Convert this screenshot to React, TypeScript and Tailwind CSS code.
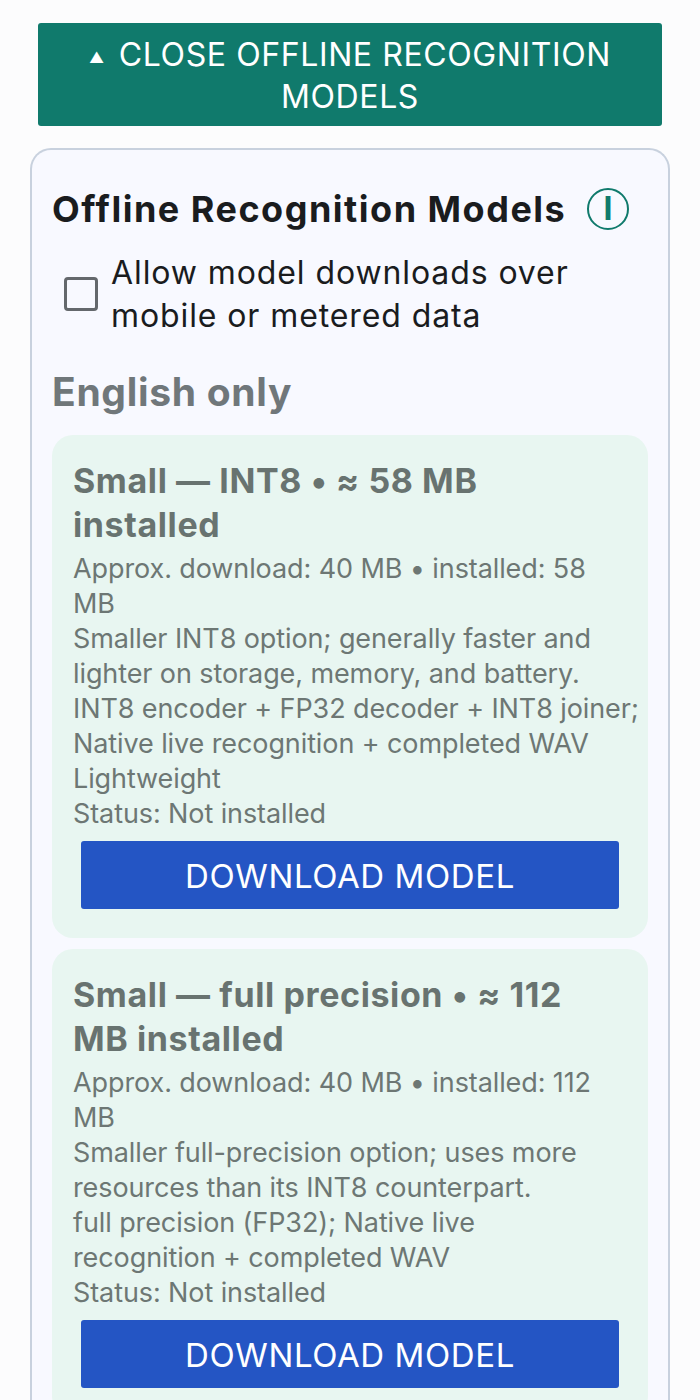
const models = [
  {
    title: ["Small — INT8 • ≈ 58 MB", "installed"],
    lines: [
      "Approx. download: 40 MB • installed: 58",
      "MB",
      "Smaller INT8 option; generally faster and",
      "lighter on storage, memory, and battery.",
      "INT8 encoder + FP32 decoder + INT8 joiner;",
      "Native live recognition + completed WAV",
      "Lightweight",
      "Status: Not installed",
    ],
  },
  {
    title: ["Small — full precision • ≈ 112", "MB installed"],
    lines: [
      "Approx. download: 40 MB • installed: 112",
      "MB",
      "Smaller full-precision option; uses more",
      "resources than its INT8 counterpart.",
      "full precision (FP32); Native live",
      "recognition + completed WAV",
      "Status: Not installed",
    ],
  },
];

export default function App() {
  return (
    <div className="h-[1400px] overflow-hidden bg-[#fcfcfd] px-[30px] pt-[23px] font-['Inter','Noto_Sans',sans-serif] text-[#1a1c1e]">
      <button className="mx-2 block h-[103px] w-[624px] rounded-[3px] bg-[#107a6c] pt-[3px] text-center text-[32px] leading-[42px] font-normal tracking-[0.6px] text-white">
        <span className="mr-[14px] align-[3px] text-[15px] leading-none">▲</span>CLOSE OFFLINE RECOGNITION
        <br />
        MODELS
      </button>

      <div className="mt-[22px] rounded-t-[21px] border-2 border-b-0 border-[#c8d1de] bg-[#f8f9ff] px-5 pt-[37px]">
        <div className="flex items-center pr-[19px]">
          <h2 className="text-[36px] leading-[44px] font-bold tracking-[1.5px] whitespace-nowrap">Offline Recognition Models</h2>
          <span className="ml-auto flex h-[42px] w-[42px] shrink-0 items-center justify-center rounded-full border-2 border-[#107a6c] text-[32px] leading-none font-bold text-[#107a6c]">
            I
          </span>
        </div>

        <label className="mt-[20px] flex items-center gap-[13px] pl-[12px]">
          <span className="h-[34px] w-[34px] shrink-0 rounded-[4px] border-[3px] border-[#64686c]" />
          <span className="text-[32px] leading-[43px] tracking-[0.9px]">
            Allow model downloads over mobile or metered data
          </span>
        </label>

        <h3 className="mt-[30px] text-[39px] leading-[50px] font-bold tracking-[0.7px] text-[#70777a]">English only</h3>

        <div className="mt-[18px] flex flex-col gap-[11px]">
          {models.map((m) => (
            <div key={m.title[0]} className="rounded-[21px] bg-[#e8f6f1] px-[21px] pt-6 pb-[29px]">
              <h4 className="text-[34px] leading-[44px] font-bold tracking-[0.6px] whitespace-nowrap text-[#687370]">
                {m.title.map((t) => (
                  <span key={t} className="block">
                    {t}
                  </span>
                ))}
              </h4>
              <div className="mt-1 text-[27px] leading-[35px] tracking-[-0.1px] whitespace-nowrap text-[#6d7774]">
                {m.lines.map((l, i) => (
                  <p key={i}>{l}</p>
                ))}
              </div>
              <button className="mx-2 mt-[10px] block h-[68px] w-[538px] rounded-[3px] bg-[#2455c4] pt-[4px] text-center text-[33px] font-normal tracking-[0.6px] text-white">
                DOWNLOAD MODEL
              </button>
            </div>
          ))}
        </div>
      </div>
    </div>
  );
}
